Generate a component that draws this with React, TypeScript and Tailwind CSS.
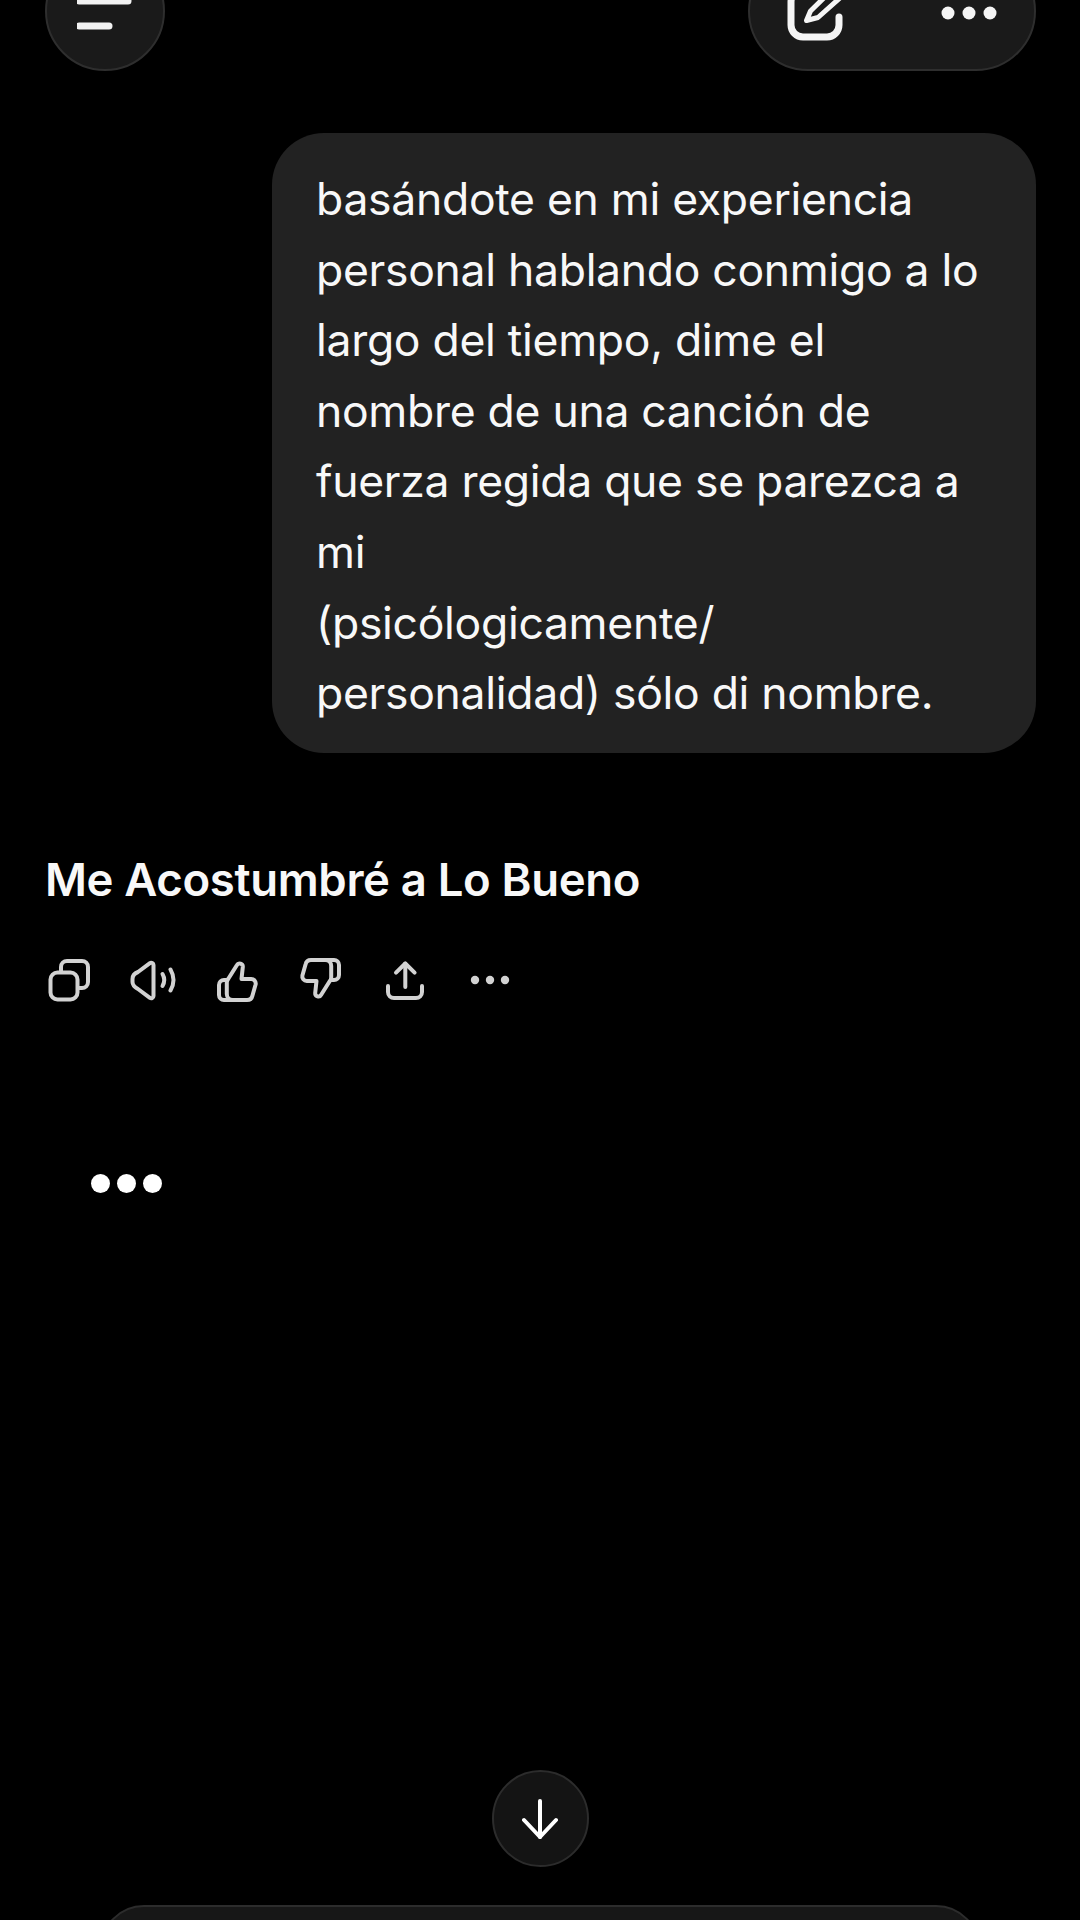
import React from "react";

const sans = "font-['Inter','Liberation_Sans',sans-serif]";

const lines = [
  "basándote en mi experiencia",
  "personal hablando conmigo a lo",
  "largo del tiempo, dime el",
  "nombre de una canción de",
  "fuerza regida que se parezca a",
  "mi",
  "(psicólogicamente/",
  "personalidad) sólo di nombre.",
];

const thumb =
  "M13.8 24H11a5 5 0 0 0-5 5v10a5 5 0 0 0 5 5h23a5.5 5.5 0 0 0 5.4-4.3l3.2-11.2a4.5 4.5 0 0 0-4.4-5.5h-9.7l1.3-12a3.2 3.2 0 0 0-6-1.8L15.5 22.5a6 6 0 0 0-1.7 4V38a6 6 0 0 0 6 6";

function ActionIcon({ children }: { children: React.ReactNode }) {
  return (
    <svg
      width="48"
      height="48"
      viewBox="0 0 48 48"
      fill="none"
      stroke="#d2d2d2"
      strokeWidth="4"
      strokeLinecap="round"
      strokeLinejoin="round"
    >
      {children}
    </svg>
  );
}

const App: React.FC = () => {
  return (
    <div className={`${sans} relative flex h-[1920px] w-[1080px] flex-col overflow-hidden bg-black text-white`}>
      <div className="mt-[-49px] flex justify-between pl-[45px] pr-[44px]">
        <div className="flex h-[120px] w-[120px] items-center justify-center rounded-full border-2 border-[#2e2e2e] bg-[#1a1a1a]">
          <svg width="56" height="50" viewBox="0 0 56 50" fill="none" stroke="#f2f2f2" strokeWidth="7" strokeLinecap="round">
            <path d="M2 15H51" />
            <path d="M2 40H32" />
          </svg>
        </div>
        <div className="flex h-[120px] w-[288px] items-center justify-center gap-[93px] rounded-[60px] border-2 border-[#2e2e2e] bg-[#1a1a1a]">
          <svg className="translate-y-[1px]" width="60" height="60" viewBox="0 0 60 60" fill="none" stroke="#f5f5f5" strokeWidth="7" strokeLinecap="round" strokeLinejoin="round">
            <path d="M30 8H17A12 12 0 0 0 5 20V43A12 12 0 0 0 17 55H41A12 12 0 0 0 53 43V35" />
            <path d="M20.5 38.5L24.5 29L47 7L55 15L32 35.5Z" strokeWidth="5" />
          </svg>
          <svg className="translate-y-[2px]" width="60" height="14" viewBox="0 0 60 14" fill="#f5f5f5">
            <circle cx="9" cy="7" r="6.5" />
            <circle cx="30" cy="7" r="6.5" />
            <circle cx="51" cy="7" r="6.5" />
          </svg>
        </div>
      </div>

      <div className="mt-[62px] flex justify-end pr-[44px]">
        <div className="w-[764px] rounded-[52px] bg-[#222222] pb-[24px] pl-[44px] pt-[31px] text-[44.5px] leading-[70.6px] tracking-[-0.3px] text-[#f8f8f8]">
          {lines.map((line) => (
            <div key={line} className="whitespace-nowrap">
              {line}
            </div>
          ))}
        </div>
      </div>

      <div className="mt-[97px] pl-[45px] text-[45.5px] font-semibold leading-[60px] tracking-[-0.35px] text-[#f8f8f8]">
        Me Acostumbré a Lo Bueno
      </div>

      <div className="mt-[46px] flex gap-[36px] pl-[45px]">
        <ActionIcon>
          <rect x="5.5" y="16.5" width="27" height="27" rx="7" />
          <path d="M16 16v-5a6 6 0 0 1 6-6h15a6 6 0 0 1 6 6v15a6 6 0 0 1-6 6h-4" />
        </ActionIcon>
        <ActionIcon>
          <path d="M24.5 9v31a2.3 2.3 0 0 1-3.6 1.9L9 33q-5.5-3-5.5-7v-3q0-5 5.5-7l11.9-8.9A2.3 2.3 0 0 1 24.5 9Z" />
          <path d="M33.5 18q3.5 6 0 12" />
          <path d="M41.5 13.5q6 10.5 0 21" />
        </ActionIcon>
        <ActionIcon>
          <path d={thumb} />
        </ActionIcon>
        <ActionIcon>
          <path d={thumb} transform="rotate(180 24 24)" />
        </ActionIcon>
        <ActionIcon>
          <path d="M24.3 7.5V31" />
          <path d="M15 16.7L24.3 7.5L33.6 16.7" />
          <path d="M7 30v6a6 6 0 0 0 6 6h22a6 6 0 0 0 6-6v-6" />
        </ActionIcon>
        <ActionIcon>
          <circle cx="10" cy="24" r="4.2" fill="#d2d2d2" stroke="none" />
          <circle cx="25" cy="24" r="4.2" fill="#d2d2d2" stroke="none" />
          <circle cx="40" cy="24" r="4.2" fill="#d2d2d2" stroke="none" />
        </ActionIcon>
      </div>

      <div className="mt-[170px] flex gap-[7px] pl-[91px]">
        <span className="h-[19px] w-[19px] rounded-full bg-white" />
        <span className="h-[19px] w-[19px] rounded-full bg-white" />
        <span className="h-[19px] w-[19px] rounded-full bg-white" />
      </div>

      <div className="mt-auto flex justify-center">
        <div className="flex h-[97px] w-[97px] items-center justify-center rounded-full border-2 border-[#2c2c2c] bg-[#141414]">
          <svg width="36" height="44" viewBox="0 0 36 44" fill="none" stroke="#ffffff" strokeWidth="4" strokeLinecap="round" strokeLinejoin="round">
            <path d="M18 4V40" />
            <path d="M2 23L18 40L34 23" />
          </svg>
        </div>
      </div>

      <div className="mx-[100px] mb-[-85px] mt-[38px] h-[100px] rounded-t-[44px] border-2 border-[#2c2c2c] bg-[#171717]" />
    </div>
  );
};

export default App;
